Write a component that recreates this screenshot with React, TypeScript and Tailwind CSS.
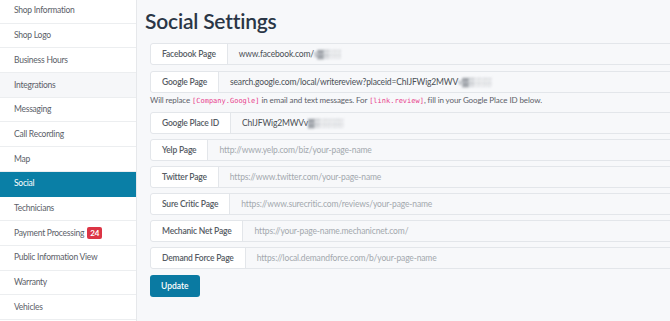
import React from "react";

const menu = [
  "Shop Information",
  "Shop Logo",
  "Business Hours",
  "Integrations",
  "Messaging",
  "Call Recording",
  "Map",
  "Social",
  "Technicians",
  "Payment Processing",
  "Public Information View",
  "Warranty",
  "Vehicles",
];

type Field = { label: string; value?: string; blur?: string; placeholder?: string };

function Group({ f }: { f: Field }) {
  return (
    <div className="flex h-[22px] w-[560px] rounded-[3px] border border-[#e3e6ea] bg-[#f7f8fa]">
      <div className="flex items-center rounded-l-[3px] border-r border-[#e3e6ea] bg-white px-[11px] text-[8.5px] font-semibold tracking-[-0.2px] text-[#555b63] whitespace-nowrap">
        {f.label}
      </div>
      <div className="flex items-center px-[11px] text-[8.5px] tracking-[-0.15px] whitespace-nowrap">
        {f.value !== undefined ? (
          <span className="text-[#4a4f55]">
            {f.value}
            {f.blur && <span className="blur-[0.8px] text-[#8a8f96]">{f.blur}</span>}
          </span>
        ) : (
          <span className="text-[#a3a8ae]">{f.placeholder}</span>
        )}
      </div>
    </div>
  );
}

export default function App() {
  const top: Field[] = [
    { label: "Facebook Page", value: "www.facebook.com/", blur: "s\u2593\u2592\u2591\u2591" },
    { label: "Google Page", value: "search.google.com/local/writereview?placeid=ChIJFWig2MWV", blur: "v\u2593\u2592\u2591\u2591\u2591" },
  ];
  const rest: Field[] = [
    { label: "Google Place ID", value: "ChIJFWig2MWVv", blur: "\u2593\u2592\u2591\u2591\u2591\u2591" },
    { label: "Yelp Page", placeholder: "http://www.yelp.com/biz/your-page-name" },
    { label: "Twitter Page", placeholder: "https://www.twitter.com/your-page-name" },
    { label: "Sure Critic Page", placeholder: "https://www.surecritic.com/reviews/your-page-name" },
    { label: "Mechanic Net Page", placeholder: "https://your-page-name.mechanicnet.com/" },
    { label: "Demand Force Page", placeholder: "https://local.demandforce.com/b/your-page-name" },
  ];
  return (
    <div
      className="flex h-[321px] w-[670px] overflow-hidden bg-[#f7f8fa]"
      style={{ fontFamily: "Lato, 'Noto Sans', sans-serif" }}
    >
      <aside className="flex w-[137px] shrink-0 flex-col border-r border-[#e6e8eb] bg-white -mt-[1px]">
        {menu.map((m) => (
          <div
            key={m}
            className={
              "flex h-[24.7px] shrink-0 items-center border-b px-[14px] text-[8.5px] tracking-[-0.25px] " +
              (m === "Social"
                ? "border-[#0a7fa6] bg-[#0a7fa6] text-white"
                : m === "Integrations"
                ? "border-[#eceef0] bg-[#f6f7f9] text-[#5b6068]"
                : "border-[#eceef0] text-[#5b6068]")
            }
          >
            {m}
            {m === "Payment Processing" && (
              <span className="ml-[3px] rounded-[2px] bg-[#dc3545] px-[3px] py-[1px] text-[8px] font-bold leading-[10px] tracking-normal text-white">
                24
              </span>
            )}
          </div>
        ))}
      </aside>
      <main className="flex-1 pl-[8px] pt-[7px]">
        <h1 className="text-[21px] font-semibold leading-[28px] tracking-[-0.2px] text-[#2a3646]">Social Settings</h1>
        <div className="ml-[5px] mt-[8px] flex flex-col">
          <div className="flex flex-col gap-[6px]">
            {top.map((f) => (
              <Group key={f.label} f={f} />
            ))}
          </div>
          <p className="mt-[1px] mb-[5px] text-[8px] leading-[12px] tracking-[-0.1px] text-[#5b6068] whitespace-nowrap">
            Will replace{" "}
            <code className="text-[#e83e8c] text-[7px] tracking-normal" style={{ fontFamily: "'DejaVu Sans Mono', monospace" }}>
              [Company.Google]
            </code>{" "}
            in email and text messages. For{" "}
            <code className="text-[#e83e8c] text-[7px] tracking-normal" style={{ fontFamily: "'DejaVu Sans Mono', monospace" }}>
              [link.review]
            </code>
            , fill in your Google Place ID below.
          </p>
          <div className="flex flex-col gap-[5px]">
            {rest.map((f) => (
              <Group key={f.label} f={f} />
            ))}
          </div>
          <div className="mt-[6px] flex">
            <button className="flex h-[22px] items-center rounded-[3px] bg-[#0a7aa2] px-[11px] text-[8.5px] font-semibold text-white">
              Update
            </button>
          </div>
        </div>
      </main>
    </div>
  );
}
